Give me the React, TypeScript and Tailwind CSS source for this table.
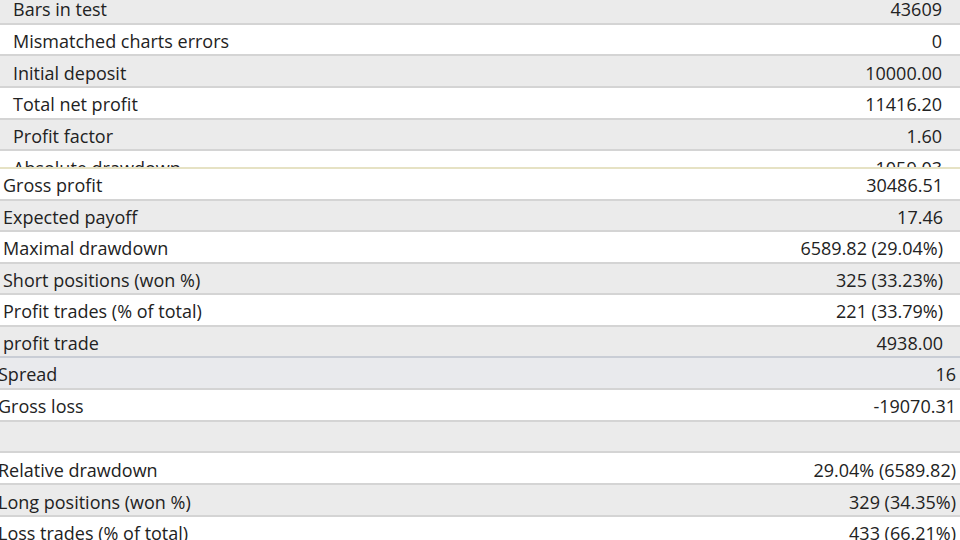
type Row = {
  label: string
  value: string
  shade: "gray" | "white" | "blue"
}

const top: Row[] = [
  { label: "Bars in test",             value: "43609",    shade: "gray" },
  { label: "Mismatched charts errors", value: "0",        shade: "white" },
  { label: "Initial deposit",          value: "10000.00", shade: "gray" },
  { label: "Total net profit",         value: "11416.20", shade: "white" },
  { label: "Profit factor",            value: "1.60",     shade: "gray" },
  { label: "Absolute drawdown",        value: "1059.03",  shade: "white" },
]

const middle: Row[] = [
  { label: "Gross profit",                value: "30486.51",        shade: "white" },
  { label: "Expected payoff",             value: "17.46",           shade: "gray" },
  { label: "Maximal drawdown",            value: "6589.82 (29.04%)", shade: "white" },
  { label: "Short positions (won %)",     value: "325 (33.23%)",    shade: "gray" },
  { label: "Profit trades (% of total)",  value: "221 (33.79%)",    shade: "white" },
  { label: "profit trade",                value: "4938.00",         shade: "gray" },
]

const bottom: Row[] = [
  { label: "Spread",                     value: "16",              shade: "blue" },
  { label: "Gross loss",                 value: "-19070.31",       shade: "white" },
  { label: "",                           value: "",                shade: "gray" },
  { label: "Relative drawdown",          value: "29.04% (6589.82)", shade: "white" },
  { label: "Long positions (won %)",     value: "329 (34.35%)",    shade: "gray" },
  { label: "Loss trades (% of total)",   value: "433 (66.21%)",    shade: "white" },
]

const shadeClass = {
  gray:  "bg-[#ebebeb]",
  white: "bg-white",
  blue:  "bg-[#e9eaed]",
}

function ReportRow({ row, height, pad }: { row: Row; height: string; pad: string }) {
  return (
    <div className={`flex items-center justify-between shrink-0 pt-[3px] border-b-2 border-[#d4d4d4] ${shadeClass[row.shade]} ${height} ${pad}`}>
      <span className="whitespace-nowrap">{row.label}</span>
      <span className="whitespace-nowrap">{row.value}</span>
    </div>
  )
}

export default function App() {
  return (
    <div
      className="w-[960px] h-[540px] overflow-hidden bg-white text-[#222] text-[18px] leading-none"
      style={{ fontFamily: '"Open Sans", "Noto Sans", sans-serif' }}
    >
      {/* first block, scrolled so the top row is cut */}
      <div className="h-[167px] overflow-hidden">
        <div className="flex flex-col -mt-[7px]">
          {top.map((r) => <ReportRow key={r.label} row={r} height="h-[31.7px]" pad="pl-[13px] pr-[18px]" />)}
        </div>
      </div>

      {/* second block */}
      <div className="h-[189px] overflow-hidden border-t-2 border-[#e6e2c4]">
        <div className="flex flex-col">
          {middle.map((r) => <ReportRow key={r.label} row={r} height="h-[31.5px]" pad="pl-[3px] pr-[17px]" />)}
        </div>
      </div>

      {/* third block, shifted left */}
      <div className="h-[184px] overflow-hidden border-t-2 border-[#c9cdd5]">
        <div className="flex flex-col">
          {bottom.map((r, i) => <ReportRow key={i} row={r} height="h-[31.8px]" pad="-ml-[2px] pr-[4px]" />)}
        </div>
      </div>
    </div>
  )
}
